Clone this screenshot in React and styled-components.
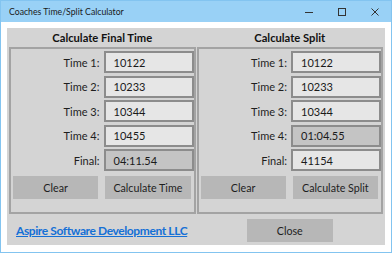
import React from 'react'
import styled, { createGlobalStyle } from 'styled-components'

const GlobalStyle = createGlobalStyle`
  html, body {
    margin: 0;
    padding: 0;
    background: white;
  }
  * {
    box-sizing: border-box;
  }
`

const FONT = `Lato, 'Noto Sans', sans-serif`

const Window = styled.div`
  width: 392px;
  height: 253px;
  border: 1px solid #83c4f0;
  display: flex;
  flex-direction: column;
  font-family: ${FONT};
  color: #1a1a1a;
  overflow: hidden;
  white-space: nowrap;
`

const TitleBar = styled.div`
  height: 21px;
  background: #99d1f6;
  display: flex;
  align-items: center;
  padding-left: 8px;
  font-size: 8.7px;
  color: #1a1a1a;
`

const Title = styled.span`
  flex: 1;
`

const WinButton = styled.span`
  width: 33px;
  height: 21px;
  display: flex;
  align-items: center;
  justify-content: center;

  svg {
    display: block;
  }
`

const Client = styled.div`
  flex: 1;
  background: white;
  padding: 6px 6px 7px 6px;
  display: flex;
`

const Panel = styled.div`
  flex: 1;
  background: #d4d4d4;
  display: flex;
  flex-direction: column;
  padding: 0 2px;
`

const Columns = styled.div`
  display: grid;
  grid-template-columns: 1fr 1fr;
  column-gap: 1px;
`

const Column = styled.div`
  display: flex;
  flex-direction: column;
`

const Header = styled.div`
  height: 19px;
  display: flex;
  align-items: center;
  justify-content: center;
  font-weight: 700;
  font-size: 11.2px;
  color: #111;
`

const GroupBox = styled.div`
  height: 167px;
  border: 2px solid #a3a3a3;
  padding: 2px 0 14px 0;
  display: flex;
  flex-direction: column;
  gap: 2.5px;
`

const Row = styled.div`
  display: flex;
  align-items: center;
  justify-content: flex-end;
  height: 22px;
`

const Label = styled.span`
  font-size: 11px;
  margin-right: 4px;
  color: #1e1e1e;
`

const TextBox = styled.div`
  width: 90px;
  height: 22px;
  border: 2px solid #8c8c8c;
  background: ${({ readOnly }) => readOnly ? '#c4c4c4' : '#e6e6e6'};
  font-size: 11px;
  padding-left: 8px;
  display: flex;
  align-items: center;
  color: #1a1a1a;
`

const ButtonRow = styled.div`
  display: grid;
  grid-template-columns: 1fr 1fr;
  gap: 7px;
  padding: 0 3px 0 2px;
  margin-top: 2px;
`

const Button = styled.button`
  height: 23px;
  width: ${({ width }) => width || 'auto'};
  border: none;
  border-radius: 0;
  background: #b7b7b7;
  font-family: ${FONT};
  font-size: 10.7px;
  color: #1e1e1e;
  padding: 0;
`

const Footer = styled.div`
  display: grid;
  grid-template-columns: 1fr 1fr;
  column-gap: 1px;
  padding-top: 5px;
  align-items: center;
`

const Link = styled.a`
  padding-left: 7px;
  font-weight: 700;
  font-size: 12px;
  letter-spacing: -0.4px;
  color: #1570d6;
  text-decoration: underline;
`

const CloseCell = styled.div`
  display: flex;
  justify-content: center;
`

const calcFinal = [
  { label: 'Time 1:', value: '10122' },
  { label: 'Time 2:', value: '10233' },
  { label: 'Time 3:', value: '10344' },
  { label: 'Time 4:', value: '10455' },
  { label: 'Final:', value: '04:11.54', readOnly: true }
]

const calcSplit = [
  { label: 'Time 1:', value: '10122' },
  { label: 'Time 2:', value: '10233' },
  { label: 'Time 3:', value: '10344' },
  { label: 'Time 4:', value: '01:04.55', readOnly: true },
  { label: 'Final:', value: '41154' }
]

const Calculator = ({ title, rows, action }) => (
  <Column>
    <Header>{title}</Header>
    <GroupBox>
      {rows.map((row) => (
        <Row key={row.label}>
          <Label>{row.label}</Label>
          <TextBox readOnly={row.readOnly}>{row.value}</TextBox>
        </Row>
      ))}
      <ButtonRow>
        <Button>Clear</Button>
        <Button>{action}</Button>
      </ButtonRow>
    </GroupBox>
  </Column>
)

const App = () => (
  <>
    <GlobalStyle />
    <Window>
      <TitleBar>
        <Title>Coaches Time/Split Calculator</Title>
        <WinButton>
          <svg width="8" height="8" viewBox="0 0 8 8">
            <line x1="0" y1="4.5" x2="8" y2="4.5" stroke="#333" strokeWidth="1" />
          </svg>
        </WinButton>
        <WinButton>
          <svg width="8" height="8" viewBox="0 0 8 8">
            <rect x="0.5" y="0.5" width="7" height="7" fill="none" stroke="#333" strokeWidth="1" />
          </svg>
        </WinButton>
        <WinButton>
          <svg width="8" height="8" viewBox="0 0 8 8">
            <path d="M0.5 0.5 L7.5 7.5 M7.5 0.5 L0.5 7.5" stroke="#333" strokeWidth="1" />
          </svg>
        </WinButton>
      </TitleBar>
      <Client>
        <Panel>
          <Columns>
            <Calculator title="Calculate Final Time" rows={calcFinal} action="Calculate Time" />
            <Calculator title="Calculate Split" rows={calcSplit} action="Calculate Split" />
          </Columns>
          <Footer>
            <Link href="#">Aspire Software Development LLC</Link>
            <CloseCell>
              <Button width="86px">Close</Button>
            </CloseCell>
          </Footer>
        </Panel>
      </Client>
    </Window>
  </>
)

export default App
